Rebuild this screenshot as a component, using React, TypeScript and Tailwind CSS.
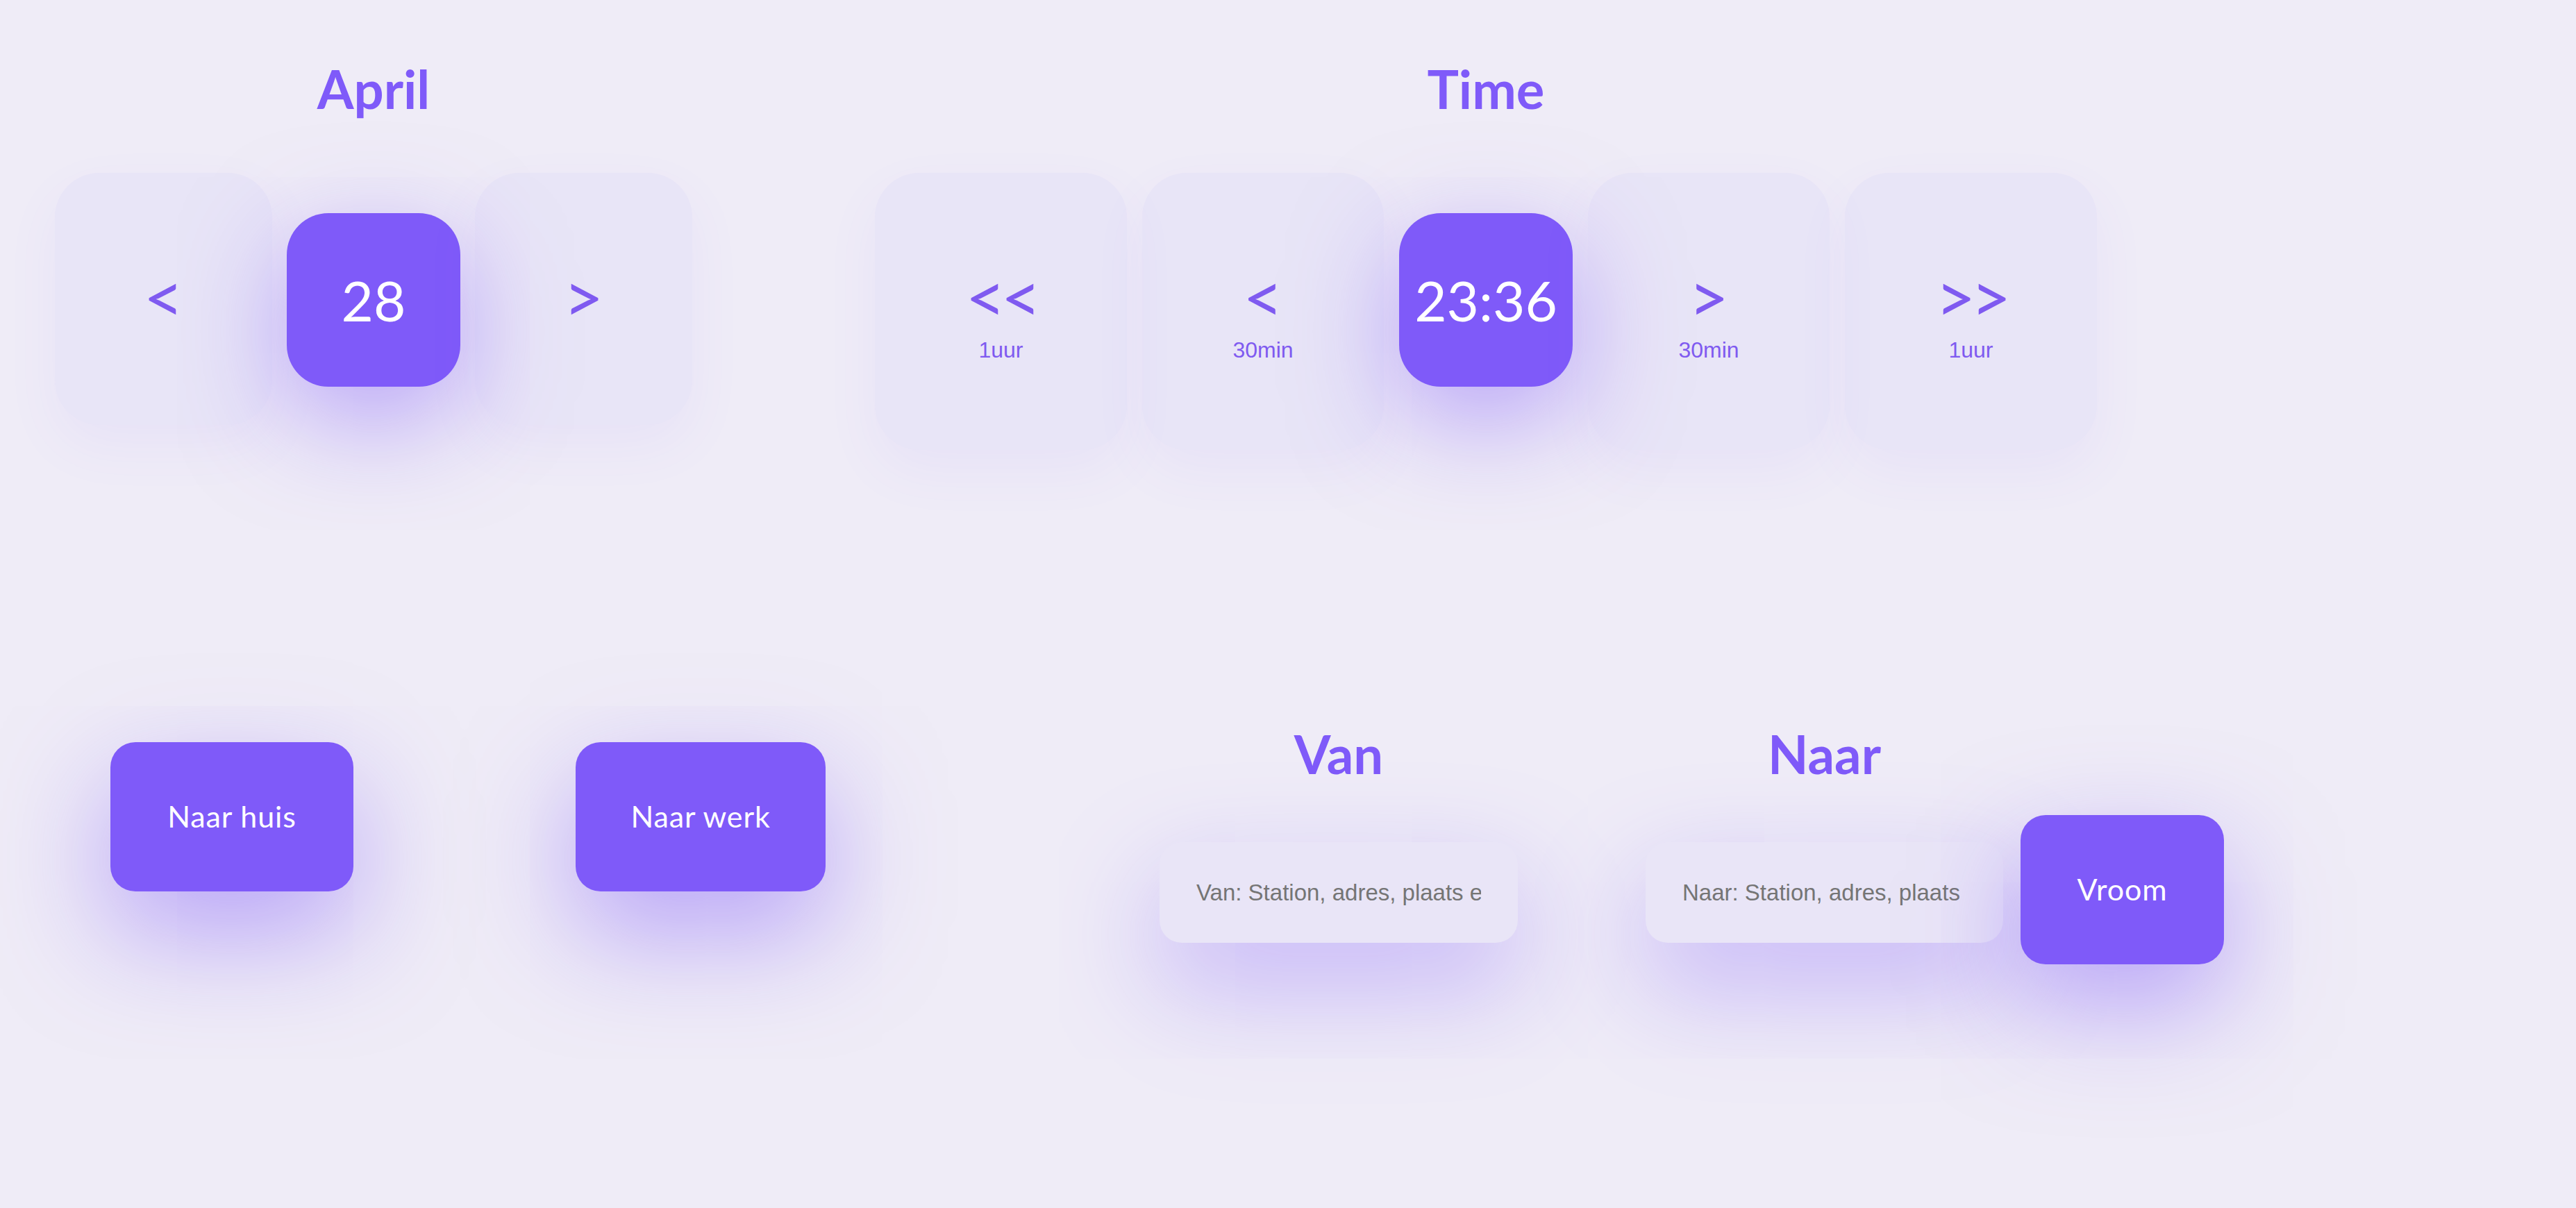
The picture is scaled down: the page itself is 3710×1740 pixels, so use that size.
import { useState } from "react";

function NavCard({
  glyph,
  label,
  size,
  tight,
}: {
  glyph: string;
  label?: string;
  size: string;
  tight?: boolean;
}) {
  return (
    <button
      className={`flex flex-col items-center rounded-[64px] bg-[rgba(127,90,249,0.05)] pt-[117px] text-[#7f5af0] shadow-[0_30px_80px_rgba(127,90,249,0.06)] ${size}`}
    >
      <span
        className={`font-['Lato'] text-[100px] leading-[1.2] ${tight ? "tracking-[-7px]" : ""}`}
      >
        {glyph}
      </span>
      {label && (
        <span className="font-['Liberation_Sans',Arial,sans-serif] text-[32px] leading-[37px]">
          {label}
        </span>
      )}
    </button>
  );
}

function Current({ value }: { value: string }) {
  return (
    <div className="mt-[58px] flex h-[250px] w-[250px] shrink-0 items-center justify-center self-start rounded-[60px] bg-[#7f5af9] font-['Lato'] text-[80px] text-white shadow-[0_45px_150px_rgba(127,90,249,0.5)]">
      {value}
    </div>
  );
}

export default function App() {
  const [from, setFrom] = useState("");
  const [to, setTo] = useState("");

  return (
    <div className="min-h-screen bg-[#efecf7] font-['Lato']">
      <div className="flex gap-[263px] pl-[79px] pt-[90px]">
        <section className="flex flex-col items-center">
          <h2 className="text-[76px] font-bold leading-none text-[#7f5af9]">April</h2>
          <div className="mt-[83px] flex items-start gap-[21px]">
            <NavCard glyph="<" size="w-[313px] h-[363px]" />
            <Current value="28" />
            <NavCard glyph=">" size="w-[313px] h-[363px]" />
          </div>
        </section>

        <section className="flex flex-col items-center">
          <h2 className="text-[76px] font-bold leading-none text-[#7f5af9]">Time</h2>
          <div className="mt-[83px] flex items-start gap-[22px]">
            <NavCard glyph="<<" label="1uur" tight size="w-[363px] h-[399px]" />
            <NavCard glyph="<" label="30min" size="w-[348px] h-[399px]" />
            <Current value="23:36" />
            <NavCard glyph=">" label="30min" size="w-[348px] h-[399px]" />
            <NavCard glyph=">>" label="1uur" tight size="w-[363px] h-[399px]" />
          </div>
        </section>
      </div>

      <div className="mt-[400px] flex items-start pl-[159px]">
        <button className="mt-[21px] h-[215px] w-[350px] rounded-[36px] bg-[#7f5af9] text-[43px] tracking-[0.02em] text-white shadow-[0_60px_160px_rgba(127,90,249,0.5)]">
          Naar huis
        </button>
        <button className="ml-[320px] mt-[21px] h-[215px] w-[360px] rounded-[36px] bg-[#7f5af9] text-[43px] tracking-[0.02em] text-white shadow-[0_60px_160px_rgba(127,90,249,0.5)]">
          Naar werk
        </button>

        <div className="ml-[481px] flex w-[516px] flex-col items-center">
          <h2 className="text-[76px] font-bold leading-none text-[#7f5af9]">Van</h2>
          <input
            value={from}
            onChange={(e) => setFrom(e.target.value)}
            placeholder="Van: Station, adres, plaats enz."
            className="mt-[89px] h-[145px] w-full rounded-[32px] bg-[rgba(127,90,249,0.045)] px-[53px] font-['Liberation_Sans',Arial,sans-serif] text-[33px] text-[#333] shadow-[0_60px_160px_rgba(127,90,249,0.4)] outline-none placeholder:text-[#757575]"
          />
        </div>

        <div className="ml-[184px] flex w-[515px] flex-col items-center">
          <h2 className="text-[76px] font-bold leading-none text-[#7f5af9]">Naar</h2>
          <input
            value={to}
            onChange={(e) => setTo(e.target.value)}
            placeholder="Naar: Station, adres, plaats enz."
            className="mt-[89px] h-[145px] w-full rounded-[32px] bg-[rgba(127,90,249,0.045)] px-[53px] font-['Liberation_Sans',Arial,sans-serif] text-[33px] text-[#333] shadow-[0_60px_160px_rgba(127,90,249,0.4)] outline-none placeholder:text-[#757575]"
          />
        </div>

        <button className="ml-[25px] mt-[126px] h-[215px] w-[293px] rounded-[36px] bg-[#7f5af9] text-[43px] tracking-[0.02em] text-white shadow-[0_60px_160px_rgba(127,90,249,0.5)]">
          Vroom
        </button>
      </div>
    </div>
  );
}
